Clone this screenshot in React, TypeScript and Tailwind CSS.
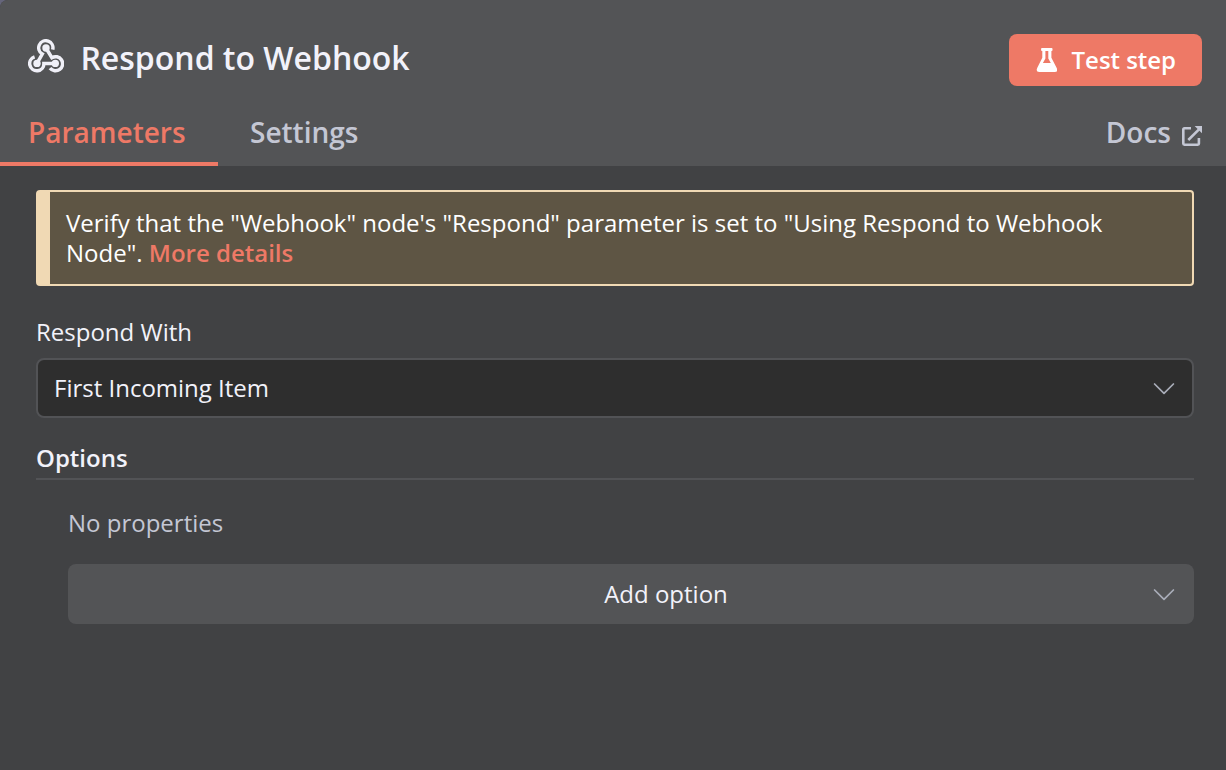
import React from "react";

function WebhookIcon() {
  return (
    <svg className="mt-[39px] h-[34px] w-9 shrink-0" viewBox="28 39 36 34" fill="none" stroke="#f0f0f8" strokeWidth="3.5">
      <path d="M52.7 49.6A7.1 7.1 0 1 0 42.3 54L37 63.3" />
      <path d="M34.6 56.9A7.1 7.1 0 1 0 43.9 63.5H55.5" />
      <path d="M50 68.2A7.1 7.1 0 1 0 51.8 57.7L46 48" />
      <g fill="#f0f0f8" stroke="none">
        <circle cx="46" cy="48" r="3.7" />
        <circle cx="37" cy="63.4" r="3.7" />
        <circle cx="55.3" cy="63.4" r="3.7" />
      </g>
    </svg>
  );
}

function ExternalIcon() {
  return (
    <svg className="mt-[126px] h-5 w-5 shrink-0" viewBox="0 0 20 20" fill="none" stroke="#c4c7d4" strokeWidth="2.6">
      <path d="M9 2.3H2.4Q1.3 2.3 1.3 3.4V17.6Q1.3 18.7 2.4 18.7H15.8Q16.9 18.7 16.9 17.6V12" />
      <path d="M6.3 14L17 3.3" />
      <path d="M12.6 0H20V7.2Z" fill="#c4c7d4" stroke="none" />
    </svg>
  );
}

function FlaskIcon() {
  return (
    <svg className="h-6 w-[21px]" viewBox="-0.5 0 21 24" fill="white">
      <path
        fillRule="evenodd"
        d="M5.4 0H15.2Q16 0 16 1V2Q16 3 15.2 3H14.9V9.8L20.2 20Q22 24 18.3 24H2.7Q-1 24 .7 20L5.8 9.8V3H5.4Q4.6 3 4.6 2V1Q4.6 0 5.4 0ZM8.9 3V10.5L6.4 15H14.3L11.8 10.5V3Z"
      />
    </svg>
  );
}

function Chevron() {
  return (
    <svg className="mt-px h-3 w-[22px] shrink-0" viewBox="0 0 22 12" fill="none" stroke="#a9adb9" strokeWidth="1.7" strokeLinecap="round" strokeLinejoin="round">
      <path d="M1.6 1L11 10.4L20.4 1" />
    </svg>
  );
}

export default function App() {
  return (
    <div className="h-[770px] w-[1226px] overflow-hidden bg-[#65657a] font-['Open_Sans',sans-serif] text-[24px] leading-[30px] text-[#f2f2fa]">
      <div className="flex h-full flex-col overflow-hidden rounded-tl-lg bg-[#414244]">
        <header className="flex h-[166px] shrink-0 flex-col bg-[#535456]">
          <div className="flex h-[100px] items-start pl-7 pr-6">
            <WebhookIcon />
            <h1 className="ml-4 mt-[38px] pl-[0.4px] text-[32px] font-semibold leading-10">Respond to Webhook</h1>
            <button className="ml-auto mt-[34px] flex h-[52px] w-[193px] shrink-0 items-center rounded-lg bg-[#ee7966] pl-[27px] font-semibold text-white">
              <FlaskIcon />
              <span className="ml-[14.6px] tracking-[-0.05px]">Test step</span>
            </button>
          </div>
          <nav className="-mt-[100px] flex h-[166px] text-[28px] font-semibold leading-[36px] text-[#c4c7d4]">
            <div className="w-[218px] border-b-4 border-[#ee7966] pl-7 pt-[114px] text-[#ee7966]">Parameters</div>
            <div className="pl-8 pt-[114px]">Settings</div>
            <div className="ml-auto mr-6 flex gap-[11px]">
              <span className="pt-[114px]">Docs</span>
              <ExternalIcon />
            </div>
          </nav>
        </header>
        <main className="flex flex-col pl-9 pr-8 pt-6">
          <div className="h-24 rounded-[4px] border-2 border-l-[14px] border-[#f0d9b4] bg-[#5e5544] pl-4 pr-16 pt-4 text-white">
            Verify that the "Webhook" node's "Respond" parameter is set to "Using Respond to Webhook Node".{" "}
            <a className="font-semibold text-[#ee7966]">More details</a>
          </div>
          <label className="mt-[31px] h-[41px]">Respond With</label>
          <div className="flex h-[60px] items-center justify-between rounded-lg border-2 border-[#525356] bg-[#2e2e2e] pl-4 pr-[17px]">
            <span>First Incoming Item</span>
            <Chevron />
          </div>
          <h2 className="mt-[25px] h-[37px] border-b-2 border-[#525356] font-semibold">Options</h2>
          <p className="ml-8 mt-7 text-[#c4c7d4]">No properties</p>
          <div className="ml-8 mt-[26px] flex h-[60px] items-center rounded-lg bg-[#535456] pr-[19px]">
            <span className="flex-1 pl-[111px] text-center">Add option</span>
            <Chevron />
          </div>
        </main>
      </div>
    </div>
  );
}
